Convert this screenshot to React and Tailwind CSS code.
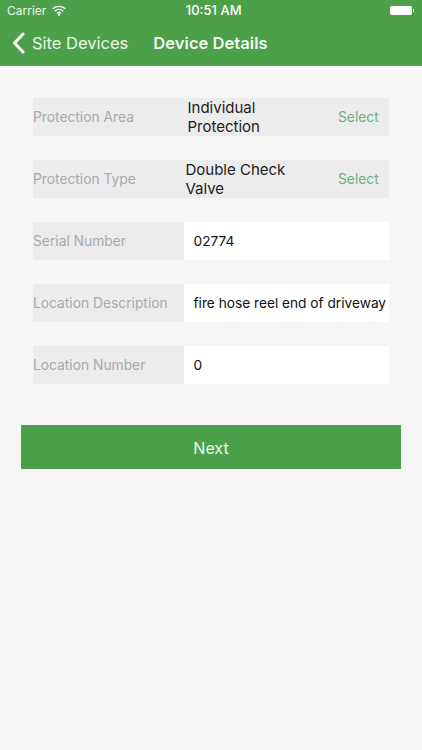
const FONT = "font-['Inter','Liberation_Sans',sans-serif]";

const Wifi = () => (
  <svg width="14" height="11" viewBox="0 0 14 11" fill="none" stroke="white" strokeWidth="1.3" strokeLinecap="round">
    <path d="M1 3.6 C4.4 0.6 9.6 0.6 13 3.6" />
    <path d="M3.1 5.8 C5.3 3.9 8.7 3.9 10.9 5.8" />
    <path d="M5.2 7.9 C6.2 7 7.8 7 8.8 7.9" />
    <circle cx="7" cy="9.6" r="0.6" fill="white" />
  </svg>
);

const Battery = () => (
  <div className="flex items-center">
    <div className="h-[9px] w-[22px] rounded-[2px] border border-white/70 bg-white" />
    <div className="h-[3px] w-[1px] bg-white/80 ml-px" />
  </div>
);

const StatusBar = () => (
  <div className="flex h-[20px] items-center px-[7px] pt-[1px] text-[12px] text-white">
    <span className="text-white/90">Carrier</span>
    <span className="ml-[6px] flex"><Wifi /></span>
    <span className="flex-1 pr-[29px] text-center text-[13px] font-medium">10:51 AM</span>
    <span className="mr-[1px]"><Battery /></span>
  </div>
);

const NavBar = () => (
  <div className="flex h-[45px] items-center pt-[1px]">
    <svg className="ml-[12px]" width="13" height="22" viewBox="0 0 13 22" fill="none" stroke="white" strokeWidth="3" strokeLinecap="round" strokeLinejoin="round">
      <path d="M11 2 L2.5 11 L11 20" />
    </svg>
    <span className="ml-[7px] text-[16.5px] text-white/90">Site Devices</span>
    <span className="ml-[25px] text-[16.6px] font-semibold text-white/95">Device Details</span>
  </div>
);

const SelectRow = ({ label, value, valueClass }) => (
  <div className="flex h-[38px] items-center bg-[#ececec]">
    <span className="w-[150px] shrink-0 text-[13.8px] text-[#a9a9a9]">{label}</span>
    <span className={`w-[155px] shrink-0 text-[15px] leading-[19px] text-[#1c1c1c] ${valueClass}`}>{value}</span>
    <span className="text-[13.8px] text-[#6fae80]">Select</span>
  </div>
);

const InputRow = ({ label, value }) => (
  <div className="flex h-[38px] items-center bg-white">
    <span className="flex h-full w-[150.5px] shrink-0 items-center bg-[#ececec] text-[13.8px] text-[#a9a9a9]">{label}</span>
    <span className="ml-[10px] whitespace-nowrap text-[13.7px] text-[#111111]">{value}</span>
  </div>
);

export default function App() {
  return (
    <div className={`flex h-[750px] w-[422px] flex-col overflow-hidden bg-[#f6f6f6] ${FONT}`}>
      <div className="border-b border-[#5aa858] bg-[#4ca04a]">
        <StatusBar />
        <NavBar />
      </div>
      <div className="flex flex-col gap-[24px] px-[33px] pt-[32px]">
        <SelectRow label="Protection Area" value="Individual Protection" valueClass="pl-[4.5px] pr-[40px]" />
        <SelectRow label="Protection Type" value="Double Check Valve" valueClass="pl-[2.5px] pr-[30px]" />
        <InputRow label="Serial Number" value="02774" />
        <InputRow label="Location Description" value="fire hose reel end of driveway" />
        <InputRow label="Location Number" value="0" />
      </div>
      <div className="px-[21px] pt-[41px]">
        <button className="flex h-[44px] w-full items-center justify-center bg-[#4ca04a] pt-[1px] text-[16px] text-white/95">Next</button>
      </div>
    </div>
  );
}
